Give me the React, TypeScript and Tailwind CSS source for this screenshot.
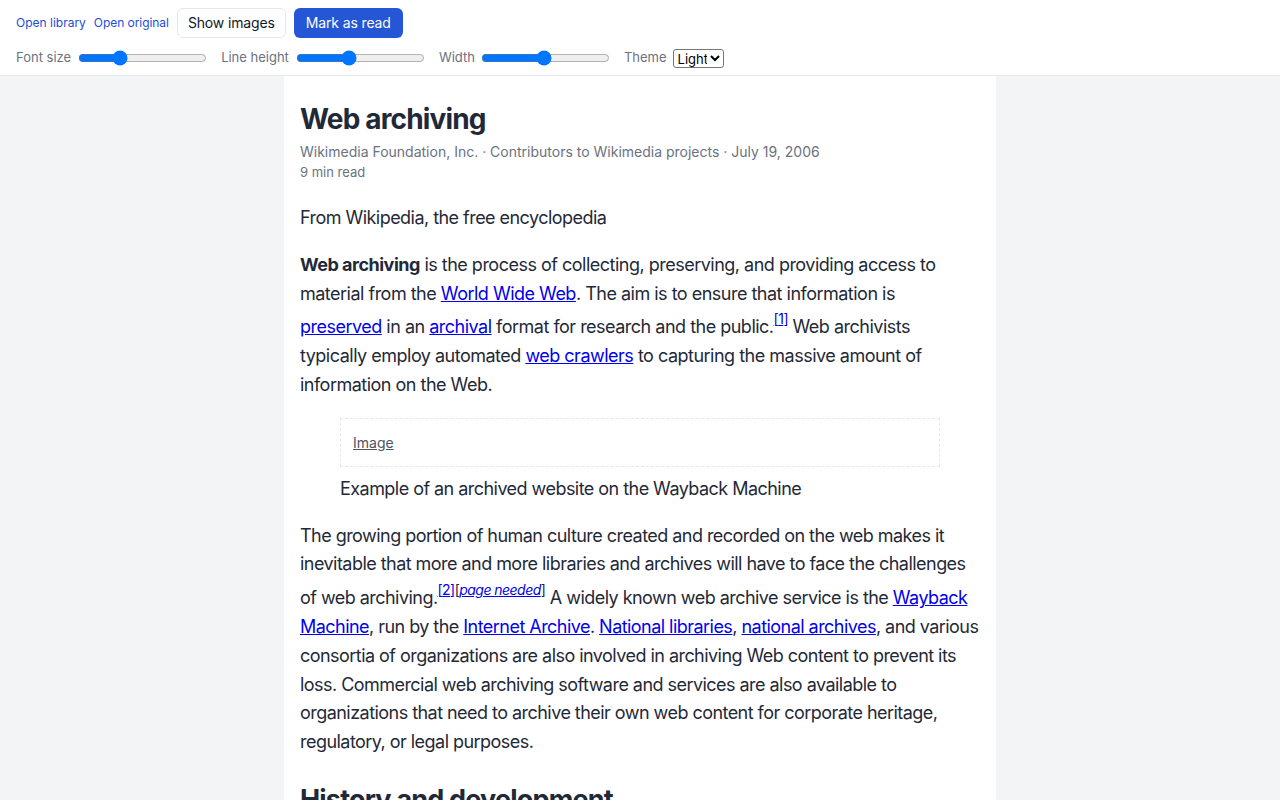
import { useState } from "react";

const A = ({ children }: { children: React.ReactNode }) => (
    <a href="#" className="text-[#0000ee] underline">
        {children}
    </a>
);

const Ref = ({ n }: { n: string }) => (
    <sup className="static align-[9px] leading-normal text-[14px]">
        <a href="#" className="text-[#0000ee] underline">
            [{n}]
        </a>
    </sup>
);

const App = () => {
    const [fontSize, setFontSize] = useState(18);
    const [lineHeight, setLineHeight] = useState(1.6);
    const [width, setWidth] = useState(712);
    const [theme, setTheme] = useState("light");

    return (
        <div className="min-h-screen bg-[#f3f4f6] font-['Inter',sans-serif] text-[#1f2937]">
            <header className="bg-white border-b border-[#e5e7eb] px-4 pt-[8px] pb-[7px] flex flex-col gap-[10px]">
                <div className="flex items-center gap-2 h-[30px]">
                    <a href="#" className="text-xs text-[#1d4ed8]">
                        Open library
                    </a>
                    <a href="#" className="text-xs tracking-[-0.005em] text-[#1d4ed8]">
                        Open original
                    </a>
                    <button className="h-[30px] px-[10px] rounded-md border border-[#e5e7eb] bg-white text-sm tracking-[-0.01em] text-[#111827]">
                        Show images
                    </button>
                    <button className="h-[30px] px-[12px] rounded-md bg-[#2456d6] text-sm tracking-[-0.01em] text-white">
                        Mark as read
                    </button>
                </div>
                <div className="flex items-center gap-[14px] text-[13px] text-[#6b7280] h-5">
                    <label className="flex items-center gap-[7px]">
                        Font size
                        <input
                            type="range"
                            min={12}
                            max={32}
                            value={fontSize}
                            onChange={(e) => setFontSize(Number(e.target.value))}
                        />
                    </label>
                    <label className="flex items-center gap-[7px]">
                        Line height
                        <input
                            type="range"
                            min={1.2}
                            max={2.2}
                            step={0.05}
                            value={lineHeight}
                            onChange={(e) => setLineHeight(Number(e.target.value))}
                        />
                    </label>
                    <label className="flex items-center gap-1.5">
                        Width
                        <input
                            type="range"
                            min={480}
                            max={960}
                            value={width}
                            onChange={(e) => setWidth(Number(e.target.value))}
                        />
                    </label>
                    <label className="flex items-center gap-1.5">
                        Theme
                        <select
                            value={theme}
                            onChange={(e) => setTheme(e.target.value)}
                            className="h-[19px] w-[51px] border border-[#767676] rounded-[3px] text-[13px] text-black bg-white px-0 font-['Inter',sans-serif]"
                        >
                            <option value="light">Light</option>
                            <option value="dark">Dark</option>
                        </select>
                    </label>
                </div>
            </header>

            <main className="mx-auto bg-white px-4 pt-[25px] pb-10 max-w-[712px]">
                <h1 className="text-[28px] font-bold leading-[36px] tracking-[-0.03em] text-[#1f2937]">
                    Web archiving
                </h1>
                <div className="mt-[5px] text-[14px] leading-[20px] text-[#6b7280]">
                    <div>Wikimedia Foundation, Inc. · Contributors to Wikimedia projects · July 19, 2006</div>
                    <div className="text-[13px]">9 min read</div>
                </div>

                <article className="mt-[22px] text-[18px] leading-[1.6] tracking-[-0.03em] text-[#1f2937]">
                    <p className="mb-[18px]">From Wikipedia, the free encyclopedia</p>
                    <p className="mb-[18px] tracking-[-0.028em]">
                        <b>Web archiving</b> is the process of collecting, preserving, and providing access to material
                        from the <A>World Wide Web</A>. The aim is to ensure that information is <A>preserved</A> in an{" "}
                        <A>archival</A> format for research and the public.
                        <Ref n="1" /> Web archivists typically employ automated <A>web crawlers</A> to capturing the
                        massive amount of information on the Web.
                    </p>
                    <figure className="mx-10 mb-[18px] mt-[4px]">
                        <div className="border border-dashed border-[#e5e7eb] px-3 py-[11px] leading-[24px] tracking-normal">
                            <a href="#" className="text-[14px] text-[#4b5563] underline">
                                Image
                            </a>
                        </div>
                        <figcaption className="mt-2">Example of an archived website on the Wayback Machine</figcaption>
                    </figure>
                    <p className="mb-[18px]">
                        The growing portion of human culture created and recorded on the web makes it inevitable that
                        more and more libraries and archives will have to face the challenges of web archiving.
                        <Ref n="2" />
                        <sup className="static align-[9px] leading-normal text-[14px]">
                            [
                            <a href="#" className="text-[#0000ee] underline italic">
                                page needed
                            </a>
                            ]
                        </sup>{" "}
                        A widely known web archive service is the <A>Wayback Machine</A>, run by the{" "}
                        <A>Internet Archive</A>. <A>National libraries</A>, <A>national archives</A>, and various
                        consortia of organizations are also involved in archiving Web content to prevent its loss.
                        Commercial web archiving software and services are also available to organizations that need to
                        archive their own web content for corporate heritage, regulatory, or legal purposes.
                    </p>
                    <h2 className="text-[27px] font-bold leading-[36px] tracking-[-0.03em] mt-[25px] mb-3">
                        History and development
                    </h2>
                    <p className="mb-[18px]">
                        While curation and organization of the web has been prevalent since the mid- to late-1990s,
                        one of the first large-scale web archiving projects was the Internet Archive, a non-profit
                        organization created by Brewster Kahle in 1996.
                    </p>
                </article>
            </main>
        </div>
    );
};

export default App;
